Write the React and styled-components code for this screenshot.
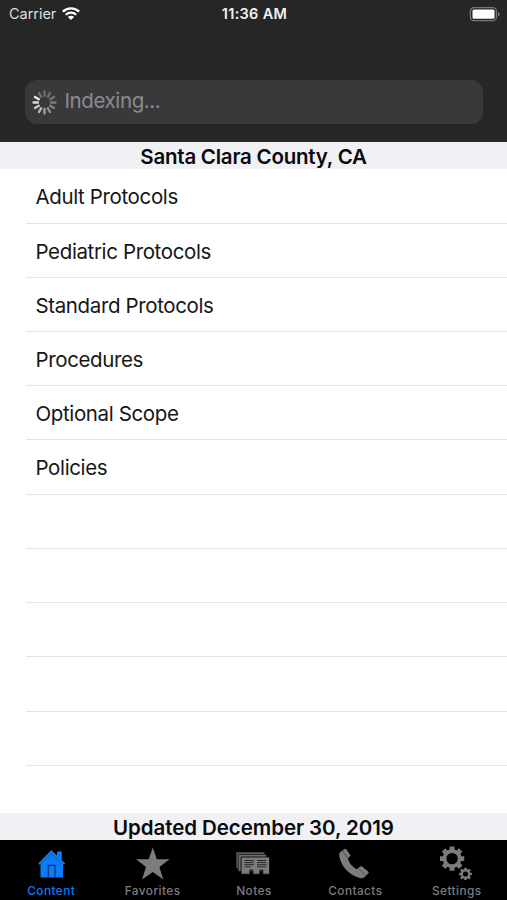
import React from "react";
import styled, { createGlobalStyle } from "styled-components";

const GlobalStyle = createGlobalStyle`
  body {
    margin: 0;
    background: #000;
    font-family: Inter, "Liberation Sans", sans-serif;
  }
`;

const Screen = styled.div`
  display: flex;
  flex-direction: column;
  width: 507px;
  height: 900px;
  overflow: hidden;
  background: #fff;
`;

const Header = styled.header`
  box-sizing: border-box;
  flex: none;
  height: 142.4px;
  background: #262627;
`;

const StatusBar = styled.div`
  box-sizing: border-box;
  display: grid;
  grid-template-columns: 1fr auto 1fr;
  align-items: center;
  height: 28px;
  padding: 0 7px 0 9px;
  color: #f2f2f2;
  font-size: 14.5px;
  line-height: 28px;
`;

const Carrier = styled.div`
  display: flex;
  align-items: center;
  gap: 6px;
  color: #dedede;
  letter-spacing: -0.04px;
`;

const Clock = styled.div`
  font-weight: 600;
  letter-spacing: 0.3px;
`;

const BatterySlot = styled.div`
  display: flex;
  justify-content: flex-end;
`;

const SearchBar = styled.div`
  box-sizing: border-box;
  display: flex;
  align-items: center;
  gap: 7.5px;
  height: 44px;
  margin: 52.4px 24.5px 0 25px;
  padding-left: 7px;
  border-radius: 12px;
  background: #39393b;
  color: #8b8b8f;
  font-size: 20.5px;
  line-height: 24px;
  letter-spacing: -0.4px;
`;

const SearchText = styled.span`
  padding-bottom: 2px;
`;

const Banner = styled.h2`
  box-sizing: border-box;
  flex: none;
  height: 27px;
  margin: 0;
  background: #f0f0f5;
  color: #0b0b0d;
  font-size: 20.5px;
  font-weight: 600;
  line-height: 29px;
  text-align: center;
  letter-spacing: ${(p) => p.$spacing}px;
`;

const List = styled.ul`
  flex: 1;
  margin: 0;
  padding: 0 0 0 26px;
  list-style: none;
`;

const Row = styled.li`
  box-sizing: border-box;
  height: 54.23px;
  padding-left: 9.5px;
  border-bottom: 1px solid #e5e5e7;
  color: #161617;
  font-size: 20.5px;
  line-height: 55.6px;
  letter-spacing: -0.37px;
`;

const TabBar = styled.nav`
  display: grid;
  grid-template-columns: repeat(5, 1fr);
  flex: none;
  height: 60px;
  background: #000;
`;

const Tab = styled.div`
  display: flex;
  flex-direction: column;
  align-items: center;
  padding-top: 4px;
  color: ${(p) => (p.$active ? "#0a7cf5" : "#7c7c7c")};
`;

const TabLabel = styled.span`
  margin-top: 3px;
  padding-left: 1px;
  font-size: 11.8px;
  font-weight: 500;
  line-height: 16px;
  letter-spacing: 0.45px;
`;

const WifiIcon = () => (
  <svg width="18" height="14" viewBox="0 0 18 14" fill="none" stroke="#fff">
    <path d="M.9 4.7a11.6 11.6 0 0 1 16.2 0" strokeWidth="2.4" />
    <path d="M3.8 7.7a7.4 7.4 0 0 1 10.4 0" strokeWidth="2.2" />
    <path d="M9 13.1 5.9 10a4.4 4.4 0 0 1 6.2 0Z" fill="#fff" stroke="none" />
  </svg>
);

const BatteryIcon = () => (
  <svg width="31" height="15" viewBox="0 0 31 15">
    <rect x="1.4" y=".7" width="26" height="13" rx="3.6" fill="none" stroke="#77777a" strokeWidth="1.3" />
    <rect x="3.5" y="2.6" width="22" height="9.2" rx="1.6" fill="#fff" />
    <path d="M28.9 4.9c2.4.9 2.4 3.6 0 4.5Z" fill="#77777a" />
  </svg>
);

const SPOKES = [0.3, 0.3, 0.32, 0.38, 0.42, 0.5, 0.6, 0.72, 0.82, 0.9, 1, 0.3];

const Spinner = () => (
  <svg width="25" height="25" viewBox="-12.5 -12.5 25 25">
    {SPOKES.map((opacity, i) => (
      <line
        key={i}
        y1="-6.5"
        y2="-11"
        stroke="#ececec"
        strokeWidth="2.3"
        strokeLinecap="round"
        opacity={opacity}
        transform={`rotate(${i * 30})`}
      />
    ))}
  </svg>
);

const HomeIcon = () => (
  <svg width="40" height="36" viewBox="0 0 40 36" fill="currentColor">
    <path d="M26 7.5h4.8v11H26z" />
    <path d="M20.3 6 34.2 19.5l-1.4 1.3-.8-.7v13.3H9.5V20.1l-.8.7-1.4-1.3Z" />
    <path d="M9.3 20.3 20.3 9.2l11.6 11.1" fill="none" stroke="#0558ae" strokeWidth=".7" />
    <path d="M17.4 33.4V21.4h6.6v12" fill="none" stroke="#003a7c" strokeWidth="1.4" />
  </svg>
);

const StarIcon = () => (
  <svg width="40" height="36" viewBox="0 0 40 36" fill="currentColor">
    <path d="m20.8 3.4 4 11.8h12.8l-10.2 7.7 3.9 12.6-10.5-7.6L10 35.5l4-12.6-10-7.7h12.7Z" />
  </svg>
);

const NotesIcon = () => (
  <svg width="40" height="36" viewBox="0 0 40 36" fill="currentColor">
    <path d="M3.4 8.4h28v16h-28z" fill="#666" />
    <path d="M5.2 10.4h28.4v17H5.2z" stroke="#111" strokeWidth=".8" fill="#6c6c6c" />
    <path d="M8.1 13h28.5v17.2h-6.8V26h-3v4.2h-6.9V26h-3v4.2H8.1Z" stroke="#000" strokeWidth=".8" />
    <path
      d="M11.5 16.5h9.3M11.5 18.6h9.3M11.5 20.7h9.3M11.5 22.8h6.5M24 16.5h9.3M24 18.6h9.3M24 20.7h9.3M24 22.8h9.3"
      stroke="#1e1e1e"
      strokeWidth=".9"
    />
  </svg>
);

const PhoneIcon = () => (
  <svg width="40" height="36" viewBox="0 0 40 36" fill="currentColor">
    <path d="M9.6 4.9Q10.5 4.3 11.2 5.3L15.3 10.9Q15.9 11.8 15 12.4L12.9 14C13.6 18.6 17.2 22.8 21.6 25.2L25.2 22.4Q26.2 21.7 27 22.4L33.3 27.7Q34.2 28.5 33.4 29.3L29.3 33.3Q27.6 34.9 24.7 34C13.5 31 4.8 21 4.1 10.6Q4 9 5.3 8Z" />
    <path d="m7.6 7 5 7.2M23.4 24.4l7.2 6.6" fill="none" stroke="#444" strokeWidth=".7" />
  </svg>
);

// Closed outline of a cog with eight square teeth around (cx, cy)
const gearPath = (cx, cy, outer, inner) => {
  const points = [];
  for (let i = 0; i < 8; i += 1) {
    const middle = (i * Math.PI) / 4;
    [
      [inner, -0.26],
      [outer, -0.2],
      [outer, 0.2],
      [inner, 0.26],
    ].forEach(([r, offset]) => {
      const x = cx + r * Math.sin(middle + offset);
      const y = cy - r * Math.cos(middle + offset);
      points.push(`${x.toFixed(2)} ${y.toFixed(2)}`);
    });
  }
  return `M${points.join("L")}Z`;
};

const SettingsIcon = () => (
  <svg width="40" height="36" viewBox="0 0 40 36" fill="currentColor">
    <path d={gearPath(16.1, 14.6, 12.4, 9.5)} />
    <circle cx="16.1" cy="14.6" r="5.7" fill="#000" />
    <path d={gearPath(29.5, 30, 6.5, 4.8)} />
    <circle cx="29.5" cy="30" r="2.6" fill="#000" />
  </svg>
);

const protocols = [
  "Adult Protocols",
  "Pediatric Protocols",
  "Standard Protocols",
  "Procedures",
  "Optional Scope",
  "Policies",
  "",
  "",
  "",
  "",
  "",
];

const tabs = [
  { label: "Content", Icon: HomeIcon, active: true },
  { label: "Favorites", Icon: StarIcon },
  { label: "Notes", Icon: NotesIcon },
  { label: "Contacts", Icon: PhoneIcon },
  { label: "Settings", Icon: SettingsIcon },
];

const App = () => {
  return (
    <>
      <GlobalStyle />
      <Screen>
        <Header>
          <StatusBar>
            <Carrier>
              Carrier
              <WifiIcon />
            </Carrier>
            <Clock>11:36 AM</Clock>
            <BatterySlot>
              <BatteryIcon />
            </BatterySlot>
          </StatusBar>
          <SearchBar>
            <Spinner />
            <SearchText>Indexing...</SearchText>
          </SearchBar>
        </Header>
        <Banner $spacing={-0.23}>Santa Clara County, CA</Banner>
        <List>
          {protocols.map((name, i) => (
            <Row key={i}>{name}</Row>
          ))}
        </List>
        <Banner $spacing={-0.07}>Updated December 30, 2019</Banner>
        <TabBar>
          {tabs.map(({ label, Icon, active }) => (
            <Tab key={label} $active={active}>
              <Icon />
              <TabLabel>{label}</TabLabel>
            </Tab>
          ))}
        </TabBar>
      </Screen>
    </>
  );
};

export default App;
